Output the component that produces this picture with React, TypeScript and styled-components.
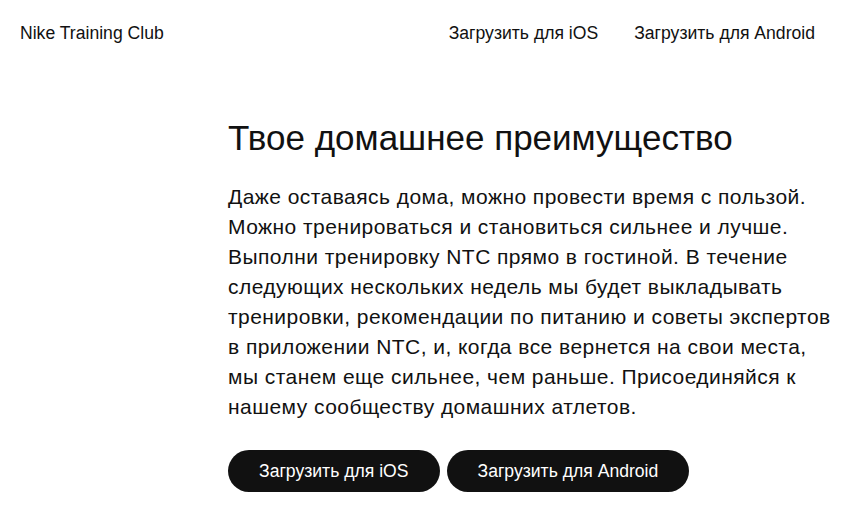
import React from "react";
import styled, { createGlobalStyle } from "styled-components";

const GlobalStyle = createGlobalStyle`
  body {
    margin: 0;
    background: #fff;
    color: #111;
    font-family: "Liberation Sans", Arial, sans-serif;
  }
`;

const Header = styled.header`
  display: flex;
  align-items: center;
  justify-content: space-between;
  height: 66px;
  padding: 0 50px 0 20px;
`;

const Brand = styled.div`
  font-size: 17.6px;
`;

const Nav = styled.nav`
  display: flex;
  gap: 36px;
`;

const NavLink = styled.a`
  font-size: 17.6px;
  color: #111;
  text-decoration: none;
`;

const Main = styled.main`
  padding: 52px 0 0 228px;
  width: 608px;
`;

const Title = styled.h1`
  margin: 0;
  font-size: 35px;
  font-weight: 400;
  line-height: 40px;
`;

const Text = styled.p`
  margin: 24px 0 0;
  font-size: 21px;
  letter-spacing: 0.45px;
  line-height: 30px;
`;

const Actions = styled.div`
  display: flex;
  gap: 7px;
  margin-top: 28px;
`;

const Button = styled.a`
  display: inline-flex;
  align-items: center;
  height: 42px;
  padding: 0 31px;
  border-radius: 21px;
  background: #111;
  color: #fff;
  font-size: 17.6px;
  text-decoration: none;
`;

const App: React.FC = () => {
  return (
    <>
      <GlobalStyle />
      <Header>
        <Brand>Nike Training Club</Brand>
        <Nav>
          <NavLink href="#">Загрузить для iOS</NavLink>
          <NavLink href="#">Загрузить для Android</NavLink>
        </Nav>
      </Header>
      <Main>
        <Title>Твое домашнее преимущество</Title>
        <Text>
          Даже оставаясь дома, можно провести время с пользой. Можно
          тренироваться и становиться сильнее и лучше. Выполни тренировку NTC
          прямо в гостиной. В течение следующих нескольких недель мы будет
          выкладывать тренировки, рекомендации по питанию и советы экспертов в
          приложении NTC, и, когда все вернется на свои места, мы станем еще
          сильнее, чем раньше. Присоединяйся к нашему сообществу домашних
          атлетов.
        </Text>
        <Actions>
          <Button href="#">Загрузить для iOS</Button>
          <Button href="#">Загрузить для Android</Button>
        </Actions>
      </Main>
    </>
  );
};

export default App;
